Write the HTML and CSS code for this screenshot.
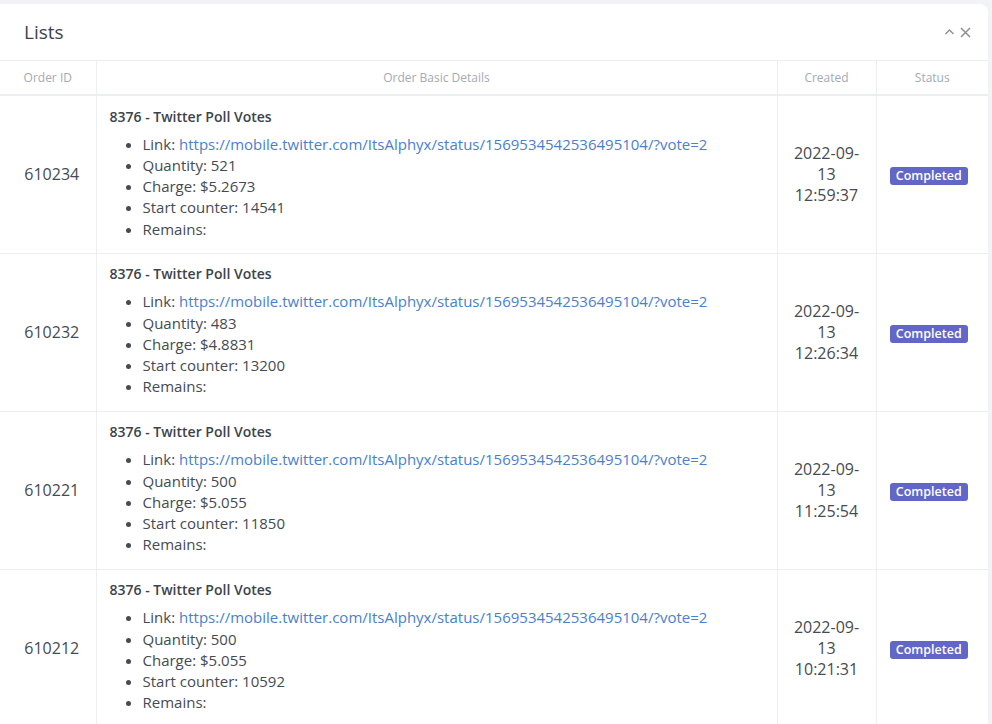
FILE: index.html
```html
<!DOCTYPE html>
<html>
<head>
<meta charset="utf-8">
<link rel="stylesheet" href="styles.css">
</head>
<body>
<div class="card">
  <div class="card-header">
    <h4 class="card-title">Lists</h4>
    <div class="card-tools">
      <svg width="11" height="8" viewBox="0 0 11 8"><path d="M1.5 6 L5.5 2 L9.5 6" fill="none" stroke="#8a8f98" stroke-width="1.4"/></svg>
      <svg width="11" height="11" viewBox="0 0 11 11"><path d="M1 1 L10 10 M10 1 L1 10" fill="none" stroke="#8a8f98" stroke-width="1.5"/></svg>
    </div>
  </div>
  <table class="orders">
    <colgroup>
      <col class="c-id"><col class="c-det"><col class="c-created"><col class="c-status">
    </colgroup>
    <thead>
      <tr><th>Order ID</th><th>Order Basic Details</th><th>Created</th><th>Status</th></tr>
    </thead>
    <tbody>
      <tr>
        <td class="id">610234</td>
        <td class="det">
          <div class="svc">8376 - Twitter Poll Votes</div>
          <ul>
            <li>Link: <a href="#">https://mobile.twitter.com/ItsAlphyx/status/1569534542536495104/?vote=2</a></li>
            <li>Quantity: 521</li>
            <li>Charge: $5.2673</li>
            <li>Start counter: 14541</li>
            <li>Remains:</li>
          </ul>
        </td>
        <td class="date">2022-09-<br>13<br>12:59:37</td>
        <td class="status"><span class="badge">Completed</span></td>
      </tr>
      <tr>
        <td class="id">610232</td>
        <td class="det">
          <div class="svc">8376 - Twitter Poll Votes</div>
          <ul>
            <li>Link: <a href="#">https://mobile.twitter.com/ItsAlphyx/status/1569534542536495104/?vote=2</a></li>
            <li>Quantity: 483</li>
            <li>Charge: $4.8831</li>
            <li>Start counter: 13200</li>
            <li>Remains:</li>
          </ul>
        </td>
        <td class="date">2022-09-<br>13<br>12:26:34</td>
        <td class="status"><span class="badge">Completed</span></td>
      </tr>
      <tr>
        <td class="id">610221</td>
        <td class="det">
          <div class="svc">8376 - Twitter Poll Votes</div>
          <ul>
            <li>Link: <a href="#">https://mobile.twitter.com/ItsAlphyx/status/1569534542536495104/?vote=2</a></li>
            <li>Quantity: 500</li>
            <li>Charge: $5.055</li>
            <li>Start counter: 11850</li>
            <li>Remains:</li>
          </ul>
        </td>
        <td class="date">2022-09-<br>13<br>11:25:54</td>
        <td class="status"><span class="badge">Completed</span></td>
      </tr>
      <tr>
        <td class="id">610212</td>
        <td class="det">
          <div class="svc">8376 - Twitter Poll Votes</div>
          <ul>
            <li>Link: <a href="#">https://mobile.twitter.com/ItsAlphyx/status/1569534542536495104/?vote=2</a></li>
            <li>Quantity: 500</li>
            <li>Charge: $5.055</li>
            <li>Start counter: 10592</li>
            <li>Remains:</li>
          </ul>
        </td>
        <td class="date">2022-09-<br>13<br>10:21:31</td>
        <td class="status"><span class="badge">Completed</span></td>
      </tr>
    </tbody>
  </table>
</div>
</body>
</html>
```
FILE: styles.css
```css
html, body {
  margin: 0;
  padding: 0;
  background: #f2f3f5;
  font-family: "Open Sans", "Noto Sans", sans-serif;
  color: #495057;
}
body {
  padding-top: 4px;
  height: 720px;
  overflow: hidden;
}
.card {
  width: 988px;
  background: #fff;
  border-radius: 0 8px 0 0;
}
.card-header {
  height: 56px;
  border-bottom: 1px solid #eceef1;
  display: flex;
  align-items: center;
  justify-content: space-between;
  padding: 0 17px 0 24px;
}
.card-title {
  margin: 0;
  font-size: 19px;
  font-weight: 400;
  color: #3d434a;
}
.card-tools {
  display: flex;
  align-items: center;
  gap: 5px;
}
.orders {
  width: 988px;
  border-collapse: collapse;
  table-layout: fixed;
}
.c-id { width: 96px; }
.c-det { width: 681px; }
.c-created { width: 99px; }
.c-status { width: 112px; }
.orders th {
  height: 33px;
  font-size: 12px;
  font-weight: 400;
  color: #a5aab2;
  text-align: center;
  border-bottom: 2px solid #eceef1;
  border-right: 1px solid #eceef1;
  padding: 0;
}
.orders td {
  border-bottom: 1px solid #eceef1;
  border-right: 1px solid #eceef1;
  vertical-align: middle;
  padding: 0;
  font-size: 15px;
  color: #454b52;
}
.orders th:last-child, .orders td:last-child { border-right: none; }
.orders tbody tr { height: 158px; }
.id {
  text-align: center;
  font-size: 16px !important;
  padding-left: 8px !important;
}
.det { padding: 9px 13px 12px !important; }
.svc {
  font-size: 14px;
  font-weight: 600;
  line-height: 22px;
  color: #3d434a;
}
.det ul {
  margin: 6px 0 0;
  padding-left: 33px;
}
.det li {
  line-height: 21.2px;
  font-size: 15px;
}
.det a {
  color: #4a7fcb;
  text-decoration: none;
}
.date {
  text-align: center;
  line-height: 21px;
  font-size: 16px !important;
}
.status {
  text-align: center;
  padding-right: 7px !important;
}
.badge {
  display: inline-block;
  background: #6267c7;
  color: #fff;
  font-size: 12.5px;
  font-weight: 600;
  line-height: 18px;
  padding: 0 6px;
  border-radius: 3px;
}
```
